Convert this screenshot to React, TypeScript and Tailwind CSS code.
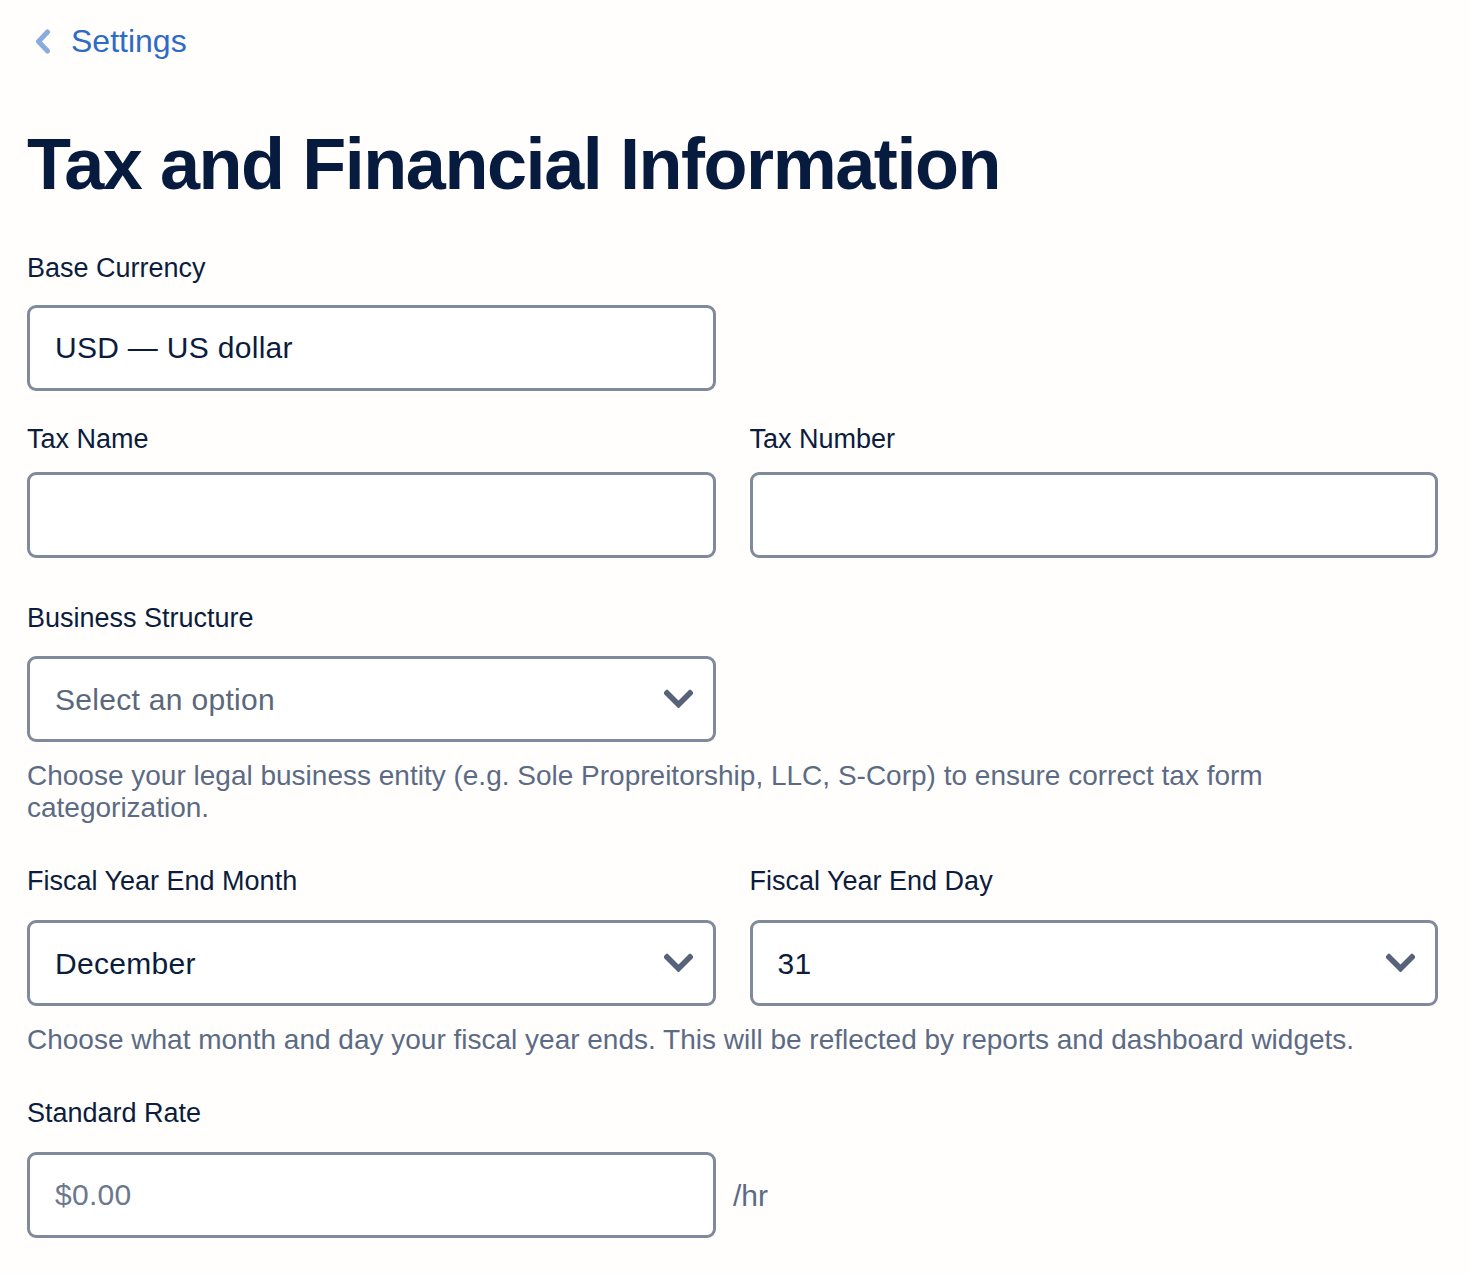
import React from "react";

const font = { fontFamily: '"Liberation Sans", Arial, sans-serif' };

function Chevron() {
  return (
    <svg
      width="29"
      height="19"
      viewBox="0 0 29 19"
      className="pointer-events-none absolute right-[23px] top-1/2 -translate-y-1/2"
    >
      <path d="M3 3.5 L14.5 15 L26 3.5" fill="none" stroke="#56637a" strokeWidth="5.5" strokeLinecap="square" />
    </svg>
  );
}

function Label({ children, className = "" }: { children: React.ReactNode; className?: string }) {
  return <label className={`block text-[27px] leading-[32px] text-[#0b1c3c] ${className}`}>{children}</label>;
}

const boxClass =
  "w-full h-[86px] rounded-[9px] border-[3px] border-[#808a9b] bg-white pl-[25px] pr-[60px] text-[30px] tracking-[0.01em] text-[#0b1c3c] outline-none placeholder:text-[#6b788d]";

function SelectBox({ value, options, placeholder }: { value: string; options: string[]; placeholder?: boolean }) {
  return (
    <div className="relative">
      <select
        defaultValue={value}
        className={`${boxClass} appearance-none ${placeholder ? "text-[#5b687c]" : ""}`}
        style={font}
      >
        {options.map((o) => (
          <option key={o}>{o}</option>
        ))}
      </select>
      <Chevron />
    </div>
  );
}

const months = [
  "January", "February", "March", "April", "May", "June",
  "July", "August", "September", "October", "November", "December",
];
const days = Array.from({ length: 31 }, (_, i) => String(i + 1));

export default function App() {
  return (
    <div className="min-h-screen bg-[#fffefd] pl-[27px] pr-[32px] pt-[21px] pb-[40px]" style={font}>
      <a href="#" className="flex items-center h-[40px] text-[32px] text-[#2e6bc6]">
        <svg width="16" height="25" viewBox="0 0 16 25" className="ml-[8px] mr-[20px]">
          <path d="M12.5 3 L3.5 12.5 L12.5 22" fill="none" stroke="#8aabdf" strokeWidth="5" strokeLinecap="round" strokeLinejoin="round" />
        </svg>
        Settings
      </a>

      <h1 className="mt-[67px] text-[72px] leading-[72px] font-bold tracking-[-0.02em] text-[#071b3e]">
        Tax and Financial Information
      </h1>

      <Label className="mt-[52px] mb-[21px]">Base Currency</Label>
      <div className="w-[689px]">
        <input className={boxClass} style={font} defaultValue="USD — US dollar" readOnly />
      </div>

      <div className="mt-[32px] grid grid-cols-2 gap-x-[34px]">
        <div>
          <Label className="mb-[17px]">Tax Name</Label>
          <input className={boxClass} style={font} />
        </div>
        <div>
          <Label className="mb-[17px]">Tax Number</Label>
          <input className={boxClass} style={font} />
        </div>
      </div>

      <Label className="mt-[44px] mb-[22px]">Business Structure</Label>
      <div className="w-[689px]">
        <SelectBox value="Select an option" options={["Select an option", "Sole Proprietorship", "LLC", "S-Corp", "C-Corp"]} placeholder />
      </div>
      <p className="mt-[18px] text-[28px] leading-[32px] text-[#5c6b84]">
        Choose your legal business entity (e.g. Sole Propreitorship, LLC, S-Corp) to ensure correct tax form
        categorization.
      </p>

      <div className="mt-[41px] grid grid-cols-2 gap-x-[34px]">
        <div>
          <Label className="mb-[23px]">Fiscal Year End Month</Label>
          <SelectBox value="December" options={months} />
        </div>
        <div>
          <Label className="mb-[23px]">Fiscal Year End Day</Label>
          <SelectBox value="31" options={days} />
        </div>
      </div>
      <p className="mt-[18px] text-[28px] leading-[32px] text-[#5c6b84]">
        Choose what month and day your fiscal year ends. This will be reflected by reports and dashboard widgets.
      </p>

      <Label className="mt-[41px] mb-[23px]">Standard Rate</Label>
      <div className="flex items-center">
        <div className="w-[689px]">
          <input className={boxClass} style={font} placeholder="$0.00" />
        </div>
        <span className="ml-[17px] text-[30px] text-[#5c6b84]">/hr</span>
      </div>
    </div>
  );
}
